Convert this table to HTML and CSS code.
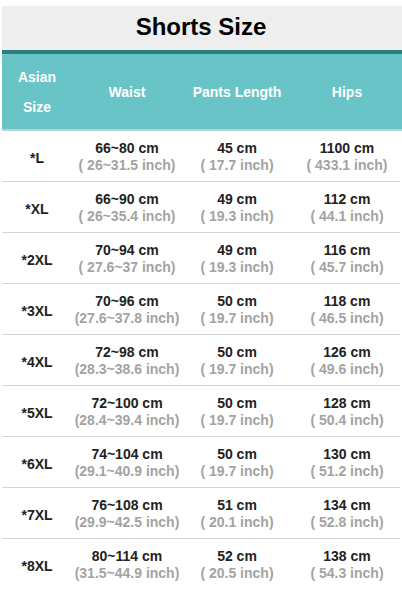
FILE: index.html
```html
<!DOCTYPE html>
<html>
<head>
<meta charset="utf-8">
<link rel="stylesheet" href="styles.css">
</head>
<body>
<div class="chart">
  <div class="title">Shorts Size</div>
  <div class="head">
    <div class="hc c1"><span>Asian</span><span>Size</span></div>
    <div class="hc">Waist</div>
    <div class="hc">Pants Length</div>
    <div class="hc">Hips</div>
  </div>
  <div class="row">
    <div class="size">*L</div>
    <div class="cell"><b>66~80 cm</b><i>( 26~31.5 inch)</i></div>
    <div class="cell"><b>45 cm</b><i>( 17.7 inch)</i></div>
    <div class="cell"><b>1100 cm</b><i>( 433.1 inch)</i></div>
  </div>
  <div class="row">
    <div class="size">*XL</div>
    <div class="cell"><b>66~90 cm</b><i>( 26~35.4 inch)</i></div>
    <div class="cell"><b>49 cm</b><i>( 19.3 inch)</i></div>
    <div class="cell"><b>112 cm</b><i>( 44.1 inch)</i></div>
  </div>
  <div class="row">
    <div class="size">*2XL</div>
    <div class="cell"><b>70~94 cm</b><i>( 27.6~37 inch)</i></div>
    <div class="cell"><b>49 cm</b><i>( 19.3 inch)</i></div>
    <div class="cell"><b>116 cm</b><i>( 45.7 inch)</i></div>
  </div>
  <div class="row">
    <div class="size">*3XL</div>
    <div class="cell"><b>70~96 cm</b><i>(27.6~37.8 inch)</i></div>
    <div class="cell"><b>50 cm</b><i>( 19.7 inch)</i></div>
    <div class="cell"><b>118 cm</b><i>( 46.5 inch)</i></div>
  </div>
  <div class="row">
    <div class="size">*4XL</div>
    <div class="cell"><b>72~98 cm</b><i>(28.3~38.6 inch)</i></div>
    <div class="cell"><b>50 cm</b><i>( 19.7 inch)</i></div>
    <div class="cell"><b>126 cm</b><i>( 49.6 inch)</i></div>
  </div>
  <div class="row">
    <div class="size">*5XL</div>
    <div class="cell"><b>72~100 cm</b><i>(28.4~39.4 inch)</i></div>
    <div class="cell"><b>50 cm</b><i>( 19.7 inch)</i></div>
    <div class="cell"><b>128 cm</b><i>( 50.4 inch)</i></div>
  </div>
  <div class="row">
    <div class="size">*6XL</div>
    <div class="cell"><b>74~104 cm</b><i>(29.1~40.9 inch)</i></div>
    <div class="cell"><b>50 cm</b><i>( 19.7 inch)</i></div>
    <div class="cell"><b>130 cm</b><i>( 51.2 inch)</i></div>
  </div>
  <div class="row">
    <div class="size">*7XL</div>
    <div class="cell"><b>76~108 cm</b><i>(29.9~42.5 inch)</i></div>
    <div class="cell"><b>51 cm</b><i>( 20.1 inch)</i></div>
    <div class="cell"><b>134 cm</b><i>( 52.8 inch)</i></div>
  </div>
  <div class="row last">
    <div class="size">*8XL</div>
    <div class="cell"><b>80~114 cm</b><i>(31.5~44.9 inch)</i></div>
    <div class="cell"><b>52 cm</b><i>( 20.5 inch)</i></div>
    <div class="cell"><b>138 cm</b><i>( 54.3 inch)</i></div>
  </div>
</div>
</body>
</html>
```
FILE: styles.css
```css
html, body {
  margin: 0;
  padding: 0;
  background: #ffffff;
}
body {
  font-family: "Liberation Sans", Arial, sans-serif;
  font-weight: bold;
  width: 402px;
  height: 592px;
  overflow: hidden;
}
.chart {
  padding: 6px 0 0 2px;
}
.title {
  height: 44px;
  background: #eeeeee;
  color: #000000;
  font-size: 24px;
  line-height: 41px;
  text-align: center;
  padding-right: 2px;
  border-bottom: 4px solid #2a7e80;
}
.head {
  display: grid;
  grid-template-columns: 70px 110px 110px 110px;
  height: 75px;
  background: #68c4c7;
  border-bottom: 2px solid #b8d6d7;
  color: #ffffff;
  font-size: 14px;
}
.hc {
  display: flex;
  align-items: center;
  justify-content: center;
}
.hc.c1 {
  flex-direction: column;
  line-height: 30px;
}
.row {
  display: grid;
  grid-template-columns: 70px 110px 110px 110px;
  height: 50px;
  border-bottom: 1px solid #d4d4d4;
  width: 398px;
  font-size: 14px;
}
.row.last {
  border-bottom: none;
}
.size {
  display: flex;
  align-items: center;
  justify-content: center;
  color: #222222;
  padding-top: 4px;
}
.cell {
  display: flex;
  flex-direction: column;
  align-items: center;
  justify-content: center;
  line-height: 17px;
  padding-top: 2px;
}
.cell b {
  color: #222222;
}
.cell i {
  font-style: normal;
  color: #a3a3a3;
}
```
